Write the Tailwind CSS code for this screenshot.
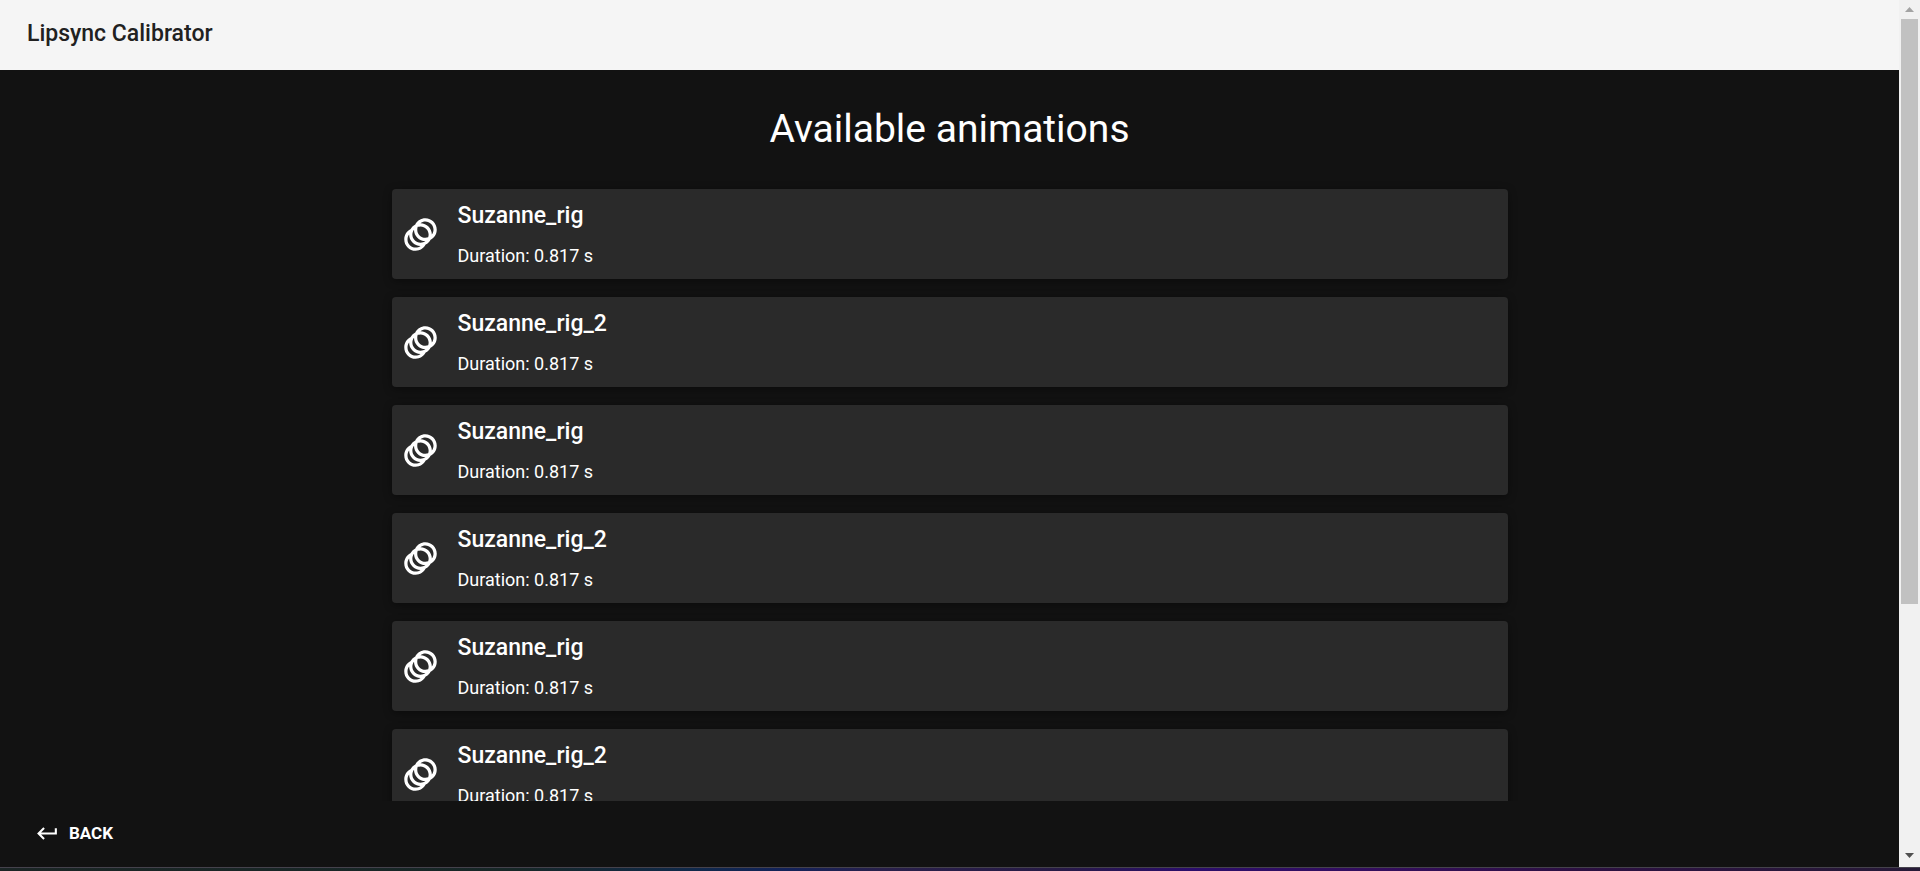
<!DOCTYPE html>
<html lang="en">
<head>
<meta charset="utf-8">
<meta name="viewport" content="width=device-width, initial-scale=1">
<title>Lipsync Calibrator</title>
<script src="https://cdn.jsdelivr.net/npm/@tailwindcss/browser@4"></script>
</head>
<body class="flex h-screen flex-col overflow-hidden bg-[#121212] font-[Roboto,sans-serif] text-white">
<svg class="hidden" aria-hidden="true">
  <symbol id="animation" viewBox="0 0 24 24"><path d="M15 2c-2.71 0-5.05 1.54-6.22 3.78-1.28.67-2.34 1.72-3 3C3.54 9.95 2 12.29 2 15c0 3.87 3.13 7 7 7 2.71 0 5.05-1.54 6.22-3.78 1.28-.67 2.34-1.72 3-3C20.46 14.05 22 11.71 22 9c0-3.87-3.13-7-7-7zM9 20c-2.76 0-5-2.24-5-5 0-1.12.37-2.16 1-3 0 3.87 3.13 7 7 7-.84.63-1.88 1-3 1zm3-3c-2.76 0-5-2.24-5-5 0-1.12.37-2.16 1-3 0 3.86 3.13 6.99 7 7-.84.63-1.88 1-3 1zm4.7-3.3c-.53.19-1.1.3-1.7.3-2.76 0-5-2.24-5-5 0-.6.11-1.17.3-1.7.53-.19 1.1-.3 1.7-.3 2.76 0 5 2.24 5 5 0 .6-.11 1.17-.3 1.7zM19 12c0-3.86-3.13-6.99-7-7 .84-.63 1.87-1 3-1 2.76 0 5 2.24 5 5 0 1.12-.37 2.16-1 3z"/></symbol>
</svg>
<div class="flex min-h-0 flex-1">
  <div class="flex min-w-0 flex-1 flex-col">
    <header class="flex h-[70px] shrink-0 items-center bg-[#f5f5f5] px-[27px] pb-[2px] text-[#212121]">
      <span class="text-[23px] leading-8 font-medium">Lipsync Calibrator</span>
    </header>
    <main class="min-h-0 flex-1 overflow-hidden">
      <h1 class="pt-9 text-center text-[39px] leading-[46px]">Available animations</h1>
      <ul class="mx-auto mt-[37px] flex w-full max-w-[1116px] flex-col gap-[18px]">
        <li><a href="#" class="flex h-[90px] items-center gap-[18px] rounded-[4px] bg-[#2a2a2a] px-[9px] shadow-[0_2px_9px_rgba(0,0,0,0.4)]"><svg class="size-[39px] fill-white" aria-hidden="true"><use href="#animation"/></svg><span class="flex flex-col gap-3 pt-1"><span class="text-[23px] leading-7 font-medium">Suzanne_rig</span><span class="text-lg leading-7">Duration: 0.817 s</span></span></a></li>
        <li><a href="#" class="flex h-[90px] items-center gap-[18px] rounded-[4px] bg-[#2a2a2a] px-[9px] shadow-[0_2px_9px_rgba(0,0,0,0.4)]"><svg class="size-[39px] fill-white" aria-hidden="true"><use href="#animation"/></svg><span class="flex flex-col gap-3 pt-1"><span class="text-[23px] leading-7 font-medium">Suzanne_rig_2</span><span class="text-lg leading-7">Duration: 0.817 s</span></span></a></li>
        <li><a href="#" class="flex h-[90px] items-center gap-[18px] rounded-[4px] bg-[#2a2a2a] px-[9px] shadow-[0_2px_9px_rgba(0,0,0,0.4)]"><svg class="size-[39px] fill-white" aria-hidden="true"><use href="#animation"/></svg><span class="flex flex-col gap-3 pt-1"><span class="text-[23px] leading-7 font-medium">Suzanne_rig</span><span class="text-lg leading-7">Duration: 0.817 s</span></span></a></li>
        <li><a href="#" class="flex h-[90px] items-center gap-[18px] rounded-[4px] bg-[#2a2a2a] px-[9px] shadow-[0_2px_9px_rgba(0,0,0,0.4)]"><svg class="size-[39px] fill-white" aria-hidden="true"><use href="#animation"/></svg><span class="flex flex-col gap-3 pt-1"><span class="text-[23px] leading-7 font-medium">Suzanne_rig_2</span><span class="text-lg leading-7">Duration: 0.817 s</span></span></a></li>
        <li><a href="#" class="flex h-[90px] items-center gap-[18px] rounded-[4px] bg-[#2a2a2a] px-[9px] shadow-[0_2px_9px_rgba(0,0,0,0.4)]"><svg class="size-[39px] fill-white" aria-hidden="true"><use href="#animation"/></svg><span class="flex flex-col gap-3 pt-1"><span class="text-[23px] leading-7 font-medium">Suzanne_rig</span><span class="text-lg leading-7">Duration: 0.817 s</span></span></a></li>
        <li><a href="#" class="flex h-[90px] items-center gap-[18px] rounded-[4px] bg-[#2a2a2a] px-[9px] shadow-[0_2px_9px_rgba(0,0,0,0.4)]"><svg class="size-[39px] fill-white" aria-hidden="true"><use href="#animation"/></svg><span class="flex flex-col gap-3 pt-1"><span class="text-[23px] leading-7 font-medium">Suzanne_rig_2</span><span class="text-lg leading-7">Duration: 0.817 s</span></span></a></li>
      </ul>
    </main>
    <footer class="flex h-[66px] shrink-0 items-center px-[35px] pb-[2px]">
      <button type="button" class="flex items-center gap-[9px] text-[17px] leading-6 font-bold"><svg class="size-[25px] fill-white" viewBox="0 0 24 24" aria-hidden="true"><path d="M19 7v4H5.830l3.580-3.590L8 6l-6 6 6 6 1.410-1.410L5.830 13H21V7z"/></svg>BACK</button>
    </footer>
  </div>
  <div class="flex w-[21px] shrink-0 flex-col items-center bg-[#f1f1f1]" aria-hidden="true">
    <svg class="h-[19px] w-[21px] shrink-0 fill-[#a3a3a3]" viewBox="0 0 21 19"><path d="M6 12 10.500 7 15 12z"/></svg>
    <div class="h-[585px] w-[17px] bg-[#c1c1c1]"></div>
    <svg class="mt-auto h-[19px] w-[21px] shrink-0 fill-[#505050]" viewBox="0 0 21 19"><path d="M6 5 10.500 10 15 5z"/></svg>
  </div>
</div>
<div class="h-1 shrink-0 border-t border-[#45424c] bg-[linear-gradient(90deg,#1b2525_0%,#172727_27%,#10294a_36%,#132259_41%,#29204a_46%,#271b45_55%,#2b0d6b_62%,#340d5d_72%,#2c1041_82%,#261a36_100%)]"></div>
</body>
</html>
